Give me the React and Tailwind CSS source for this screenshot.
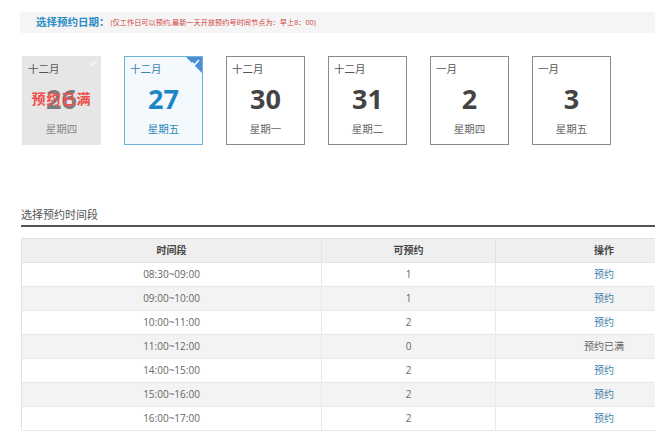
import React from "react";

const days = [
  { m: "十二月", d: "26", w: "星期四", full: true },
  { m: "十二月", d: "27", w: "星期五", selected: true },
  { m: "十二月", d: "30", w: "星期一" },
  { m: "十二月", d: "31", w: "星期二" },
  { m: "一月", d: "2", w: "星期四" },
  { m: "一月", d: "3", w: "星期五" },
];

const rows = [
  ["08:30~09:00", "1", true],
  ["09:00~10:00", "1", true],
  ["10:00~11:00", "2", true],
  ["11:00~12:00", "0", false],
  ["14:00~15:00", "2", true],
  ["15:00~16:00", "2", true],
  ["16:00~17:00", "2", true],
];

function Check({ color }) {
  return (
    <svg width="9" height="7" viewBox="0 0 9 7" className="absolute top-[2px] right-[2px]">
      <path d="M1 3.5 L3.5 6 L8 1" fill="none" stroke={color} strokeWidth="1.6" />
    </svg>
  );
}

function Card({ m, d, w, full, selected }) {
  let box = "border border-[#8a8a8a] bg-white";
  if (full) box = "border border-[#e6e6e6] bg-[#e6e6e6]";
  if (selected) box = "border border-[#6fb3d6] bg-[#f3f9fc]";
  let num = "text-[#444]";
  if (full) num = "text-[#7b7b7b]";
  if (selected) num = "text-[#1d87c3]";
  let wk = "text-[#666]";
  if (full) wk = "text-[#888]";
  if (selected) wk = "text-[#2f86b8]";
  let mon = "text-[#555]";
  if (selected) mon = "text-[#3a86b2]";
  return (
    <div className={"relative w-[79px] h-[89px] shrink-0 overflow-hidden " + box}>
      {selected && (
        <div className="absolute top-0 right-0 w-0 h-0 border-t-[16px] border-l-[16px] border-t-[#4a8fd3] border-l-transparent" />
      )}
      {selected && <Check color="#ffffff" />}
      {full && <Check color="#f5f5f5" />}
      <div className="flex flex-col h-full">
        <div className={"pl-[5px] pt-[5px] text-[10.5px] leading-[14px] " + mon}>{m}</div>
        <div className={"relative text-center text-[27px] font-bold leading-[30px] mt-[8px] " + num}>
          {d}
          {full && (
            <div className="absolute inset-0 flex items-center justify-center text-[14px] font-bold tracking-[1px] text-[#ef4e4a]">
              预约已满
            </div>
          )}
        </div>
        <div className={"text-center text-[10.5px] leading-[14px] mt-[8px] " + wk}>{w}</div>
      </div>
    </div>
  );
}

export default function App() {
  return (
    <div
      className="w-[655px] h-[431px] overflow-hidden bg-white"
      style={{ fontFamily: '"Open Sans", "Noto Sans CJK SC", sans-serif' }}
    >
      <div className="ml-[20px] mt-[12px] h-[21px] bg-[#f5f5f5] flex items-center pl-[16px]">
        <span className="text-[10.5px] font-bold text-[#2d8cc4] leading-none">选择预约日期：</span>
        <span className="ml-[1px] text-[7.2px] text-[#d0443e] leading-none">
          (仅工作日可以预约,最新一天开放预约号时间节点为：早上8：00)
        </span>
      </div>

      <div className="flex gap-[23px] pl-[22px] mt-[23px]">
        {days.map((x, i) => (
          <Card key={i} {...x} />
        ))}
      </div>

      <div className="ml-[21px] mt-[62px] w-[700px]">
        <div className="text-[11px] leading-[16px] text-[#555] pb-[2px] border-b-2 border-[#555]">
          选择预约时间段
        </div>
      </div>

      <div className="ml-[21px] mt-[11px] w-[700px] border-l border-t border-[#e2e2e2] text-[10px] text-[#666]">
        <div className="flex h-[24px] bg-[#efefef] border-b border-[#e2e2e2] text-[#444]">
          <div className="w-[300px] flex items-center justify-center border-r border-[#e2e2e2] font-semibold">时间段</div>
          <div className="w-[174px] flex items-center justify-center border-r border-[#e2e2e2] font-semibold">可预约</div>
          <div className="w-[216px] flex items-center justify-center font-semibold">操作</div>
        </div>
        {rows.map(([t, n, ok], i) => (
          <div
            key={i}
            className={
              "flex h-[24px] border-b border-[#e8e8e8] " + (i % 2 === 1 ? "bg-[#f3f3f3]" : "bg-white")
            }
          >
            <div className="w-[300px] flex items-center justify-center border-r border-[#e8e8e8]">{t}</div>
            <div className="w-[174px] flex items-center justify-center border-r border-[#e8e8e8]">{n}</div>
            <div className={"w-[216px] flex items-center justify-center " + (ok ? "text-[#3b7fab]" : "text-[#666]")}>
              {ok ? "预约" : "预约已满"}
            </div>
          </div>
        ))}
      </div>
    </div>
  );
}
